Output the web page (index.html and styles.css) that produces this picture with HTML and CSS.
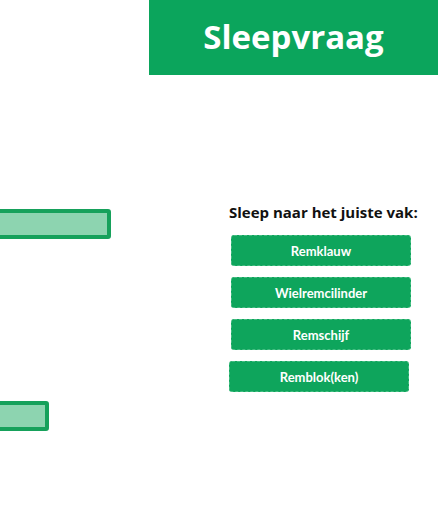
FILE: index.html
```html
<!DOCTYPE html>
<html lang="nl">
<head>
<meta charset="utf-8">
<title>Sleepvraag</title>
<link rel="stylesheet" href="styles.css">
</head>
<body>
<header class="title-bar">
  <h1 class="title">Sleepvraag</h1>
</header>
<main class="question">
  <div class="canvas">
    <div class="drop-zone drop-zone--one"></div>
    <div class="drop-zone drop-zone--two"></div>
  </div>
  <section class="panel">
    <p class="instruction">Sleep naar het juiste vak:</p>
    <div class="options">
      <div class="option">Remklauw</div>
      <div class="option">Wielremcilinder</div>
      <div class="option">Remschijf</div>
      <div class="option option--shifted">Remblok(ken)</div>
    </div>
  </section>
</main>
</body>
</html>
```

FILE: styles.css
```css
html, body {
  margin: 0;
  padding: 0;
  background: #ffffff;
}

body {
  width: 448px;
  height: 506px;
  overflow: hidden;
  font-family: "Open Sans", "Liberation Sans", sans-serif;
}

.title-bar {
  margin-left: 149px;
  width: 289px;
  height: 75px;
  background: #0ba55c;
  display: flex;
  align-items: center;
  justify-content: center;
}

.title {
  margin: 0;
  color: #ffffff;
  font-family: "Open Sans", sans-serif;
  font-weight: 700;
  font-size: 33px;
  line-height: 1;
  padding-bottom: 2px;
}

.question {
  display: flex;
}

.canvas {
  position: relative;
  width: 229px;
  height: 400px;
  flex-shrink: 0;
}

.drop-zone {
  position: absolute;
  height: 30px;
  box-sizing: border-box;
  border: 4px solid #16a15b;
  background: #8dd4b0;
  border-radius: 3px;
}

.drop-zone--one {
  left: -40px;
  width: 151px;
  top: 134px;
}

.drop-zone--two {
  left: -40px;
  width: 89px;
  top: 326px;
}

.panel {
  padding-top: 127px;
  display: flex;
  flex-direction: column;
}

.instruction {
  margin: 0;
  font-family: "Open Sans", sans-serif;
  font-weight: 700;
  font-size: 15px;
  line-height: 20px;
  color: #111111;
  white-space: nowrap;
}

.options {
  margin-top: 13px;
  display: flex;
  flex-direction: column;
  gap: 11px;
  padding-left: 2px;
}

.option {
  width: 180px;
  height: 31px;
  box-sizing: border-box;
  background: #0ea55c;
  border: 1px dashed #45bd82;
  border-radius: 3px;
  color: #ffffff;
  font-family: Lato, "Open Sans", sans-serif;
  font-weight: 700;
  font-size: 13px;
  display: flex;
  align-items: center;
  justify-content: center;
}

.option--shifted {
  margin-left: -2px;
}
```
